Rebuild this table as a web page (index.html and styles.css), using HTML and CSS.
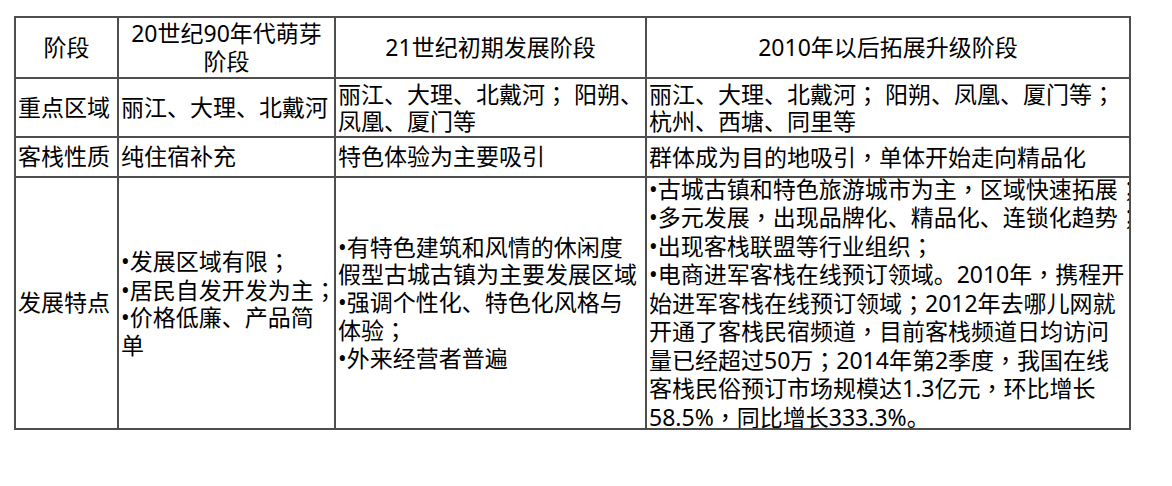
FILE: index.html
```html
<!DOCTYPE html>
<html lang="zh-CN">
<head>
<meta charset="utf-8">
<title>客栈发展阶段</title>
<link rel="stylesheet" href="styles.css">
</head>
<body>
<div class="table">
  <div class="cell head"><div class="txt">阶段</div></div>
  <div class="cell head"><div class="txt">20世纪90年代萌芽<br>阶段</div></div>
  <div class="cell head"><div class="txt">21世纪初期发展阶段</div></div>
  <div class="cell head"><div class="txt">2010年以后拓展升级阶段</div></div>

  <div class="cell"><div class="txt">重点区域</div></div>
  <div class="cell"><div class="txt">丽江、大理、北戴河</div></div>
  <div class="cell"><div class="txt">丽江、大理、北戴河<span class="p" lang="zh-TW">；</span> 阳朔、<br>凤凰、厦门等</div></div>
  <div class="cell"><div class="txt">丽江、大理、北戴河<span class="p" lang="zh-TW">；</span> 阳朔、凤凰、厦门等<span class="p" lang="zh-TW">；</span><br>杭州、西塘、同里等</div></div>

  <div class="cell"><div class="txt">客栈性质</div></div>
  <div class="cell"><div class="txt">纯住宿补充</div></div>
  <div class="cell"><div class="txt">特色体验为主要吸引</div></div>
  <div class="cell"><div class="txt">群体成为目的地吸引<span class="p" lang="zh-TW">，</span>单体开始走向精品化</div></div>

  <div class="cell"><div class="txt">发展特点</div></div>
  <div class="cell"><div class="txt">•发展区域有限<span class="p" lang="zh-TW">；</span><br>•居民自发开发为主<span class="p" lang="zh-TW">；</span><br>•价格低廉、产品简<br>单</div></div>
  <div class="cell"><div class="txt">•有特色建筑和风情的休闲度<br>假型古城古镇为主要发展区域<br>•强调个性化、特色化风格与<br>体验<span class="p" lang="zh-TW">；</span><br>•外来经营者普遍</div></div>
  <div class="cell"><div class="txt">•古城古镇和特色旅游城市为主<span class="p" lang="zh-TW">，</span>区域快速拓展<span class="p" lang="zh-TW">；</span><br>•多元发展<span class="p" lang="zh-TW">，</span>出现品牌化、精品化、连锁化趋势<span class="p" lang="zh-TW">；</span><br>•出现客栈联盟等行业组织<span class="p" lang="zh-TW">；</span><br>•电商进军客栈在线预订领域。2010年<span class="p" lang="zh-TW">，</span>携程开<br>始进军客栈在线预订领域<span class="p" lang="zh-TW">；</span>2012年去哪儿网就<br>开通了客栈民宿频道<span class="p" lang="zh-TW">，</span>目前客栈频道日均访问<br>量已经超过50万<span class="p" lang="zh-TW">；</span>2014年第2季度<span class="p" lang="zh-TW">，</span>我国在线<br>客栈民俗预订市场规模达1.3亿元<span class="p" lang="zh-TW">，</span>环比增长<br>58.5%<span class="p" lang="zh-TW">，</span>同比增长333.3%。</div></div>
</div>
</body>
</html>
```
FILE: styles.css
```css
html, body {
  margin: 0;
  padding: 0;
  background: #ffffff;
}

body {
  font-family: "Noto Sans", "Noto Sans CJK SC", sans-serif;
  color: #000000;
}

.table {
  display: grid;
  grid-template-columns: 101px 215px 309px 482px;
  grid-template-rows: 59px 57px 38px 250px;
  gap: 2px;
  padding: 2px;
  width: max-content;
  margin: 16px 0 0 14px;
  background: #4e4e4e;
}

.cell {
  background: #ffffff;
  display: flex;
  align-items: center;
  padding: 0 2px;
  overflow: hidden;
  font-size: 23px;
  line-height: 27.5px;
}

.txt {
  white-space: nowrap;
}

.head {
  justify-content: center;
  text-align: center;
}

.p {
  font-family: "Noto Sans CJK TC", sans-serif;
}
```
